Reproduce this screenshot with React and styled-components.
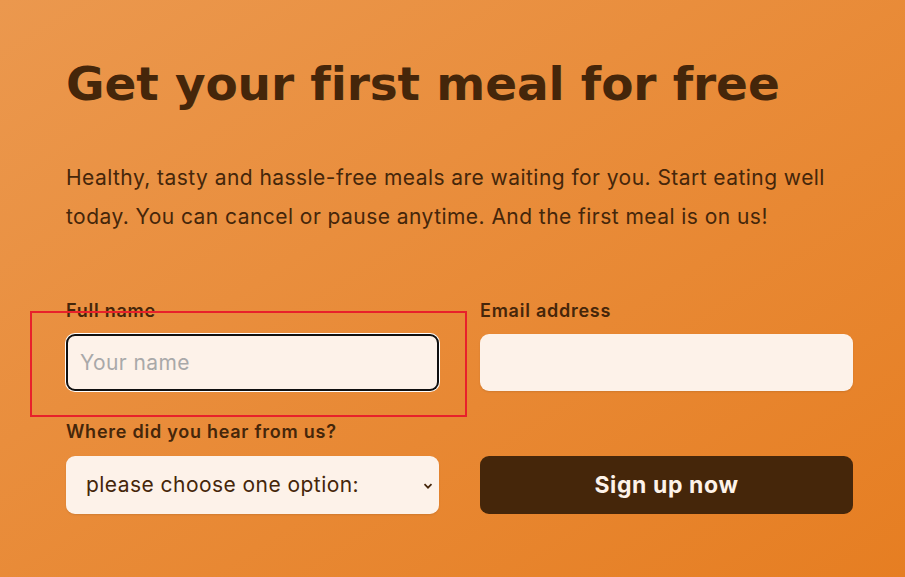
import React from "react";
import styled, { createGlobalStyle } from "styled-components";

const GlobalStyle = createGlobalStyle`
  * { box-sizing: border-box; margin: 0; padding: 0; }
  html, body { height: 100%; }
  body {
    font-family: Inter, "Noto Sans", sans-serif;
    color: #45260a;
    background: linear-gradient(to right bottom, #eb984e, #e67e22);
    overflow: hidden;
  }
`;

const Page = styled.section`
  position: relative;
  width: 905px;
  height: 577px;
  padding: 57px 53px 0 66px;
`;

const Heading = styled.h2`
  font-family: "DejaVu Sans", Inter, sans-serif;
  font-size: 47px;
  font-weight: 700;
  letter-spacing: -0.1px;
  line-height: 54px;
  margin-bottom: 48px;
`;

const Lead = styled.p`
  font-size: 21px;
  line-height: 38.85px;
  letter-spacing: 0.45px;
  max-width: 780px;
  margin-bottom: 63px;
`;

const Form = styled.form`
  display: grid;
  grid-template-columns: 373px 373px;
  column-gap: 41px;
  row-gap: 30px;
`;

const Field = styled.div`
  display: flex;
  flex-direction: column;
  gap: 13px;
`;

const Label = styled.label`
  font-size: 18px;
  font-weight: 600;
  letter-spacing: 0.75px;
  line-height: 21.6px;
`;

const Input = styled.input`
  height: 57px;
  width: 100%;
  border: none;
  border-radius: 9px;
  background: #fdf2e9;
  padding: 0 14px;
  font-family: inherit;
  font-size: 21px;
  letter-spacing: 0.4px;
  color: inherit;
  box-shadow: ${(p) =>
    p.$focused
      ? "0 0 0 2px #101010 inset, 0 0 0 1px #fff"
      : "0 1px 2px rgba(0, 0, 0, 0.1)"};
  outline: none;

  &::placeholder {
    color: #a9a9a9;
  }
`;

const SelectWrap = styled.div`
  position: relative;
`;

const Select = styled.select`
  appearance: none;
  height: 58px;
  width: 100%;
  border: none;
  border-radius: 9px;
  background: #fdf2e9;
  padding: 0 20px;
  font-family: inherit;
  font-size: 21px;
  letter-spacing: 0.45px;
  color: #45260a;
  box-shadow: 0 1px 2px rgba(0, 0, 0, 0.1);
`;

const Chevron = styled.svg`
  position: absolute;
  right: 6px;
  top: 25px;
  pointer-events: none;
`;

const Button = styled.button`
  align-self: end;
  height: 58px;
  border: none;
  border-radius: 9px;
  background: #45260a;
  color: #fdf2e9;
  font-family: inherit;
  font-size: 23px;
  font-weight: 700;
  letter-spacing: 0.6px;
`;

const Annotation = styled.div`
  position: absolute;
  left: 30px;
  top: 311px;
  width: 437px;
  height: 106px;
  border: 2px solid #e8212b;
  pointer-events: none;
`;

export default function App() {
  return (
    <>
      <GlobalStyle />
      <Page>
        <Heading>Get your first meal for free</Heading>
        <Lead>
          Healthy, tasty and hassle-free meals are waiting for you. Start eating well
          today. You can cancel or pause anytime. And the first meal is on us!
        </Lead>
        <Form onSubmit={(e) => e.preventDefault()}>
          <Field>
            <Label htmlFor="full-name">Full name</Label>
            <Input id="full-name" type="text" placeholder="Your name" $focused />
          </Field>
          <Field>
            <Label htmlFor="email">Email address</Label>
            <Input id="email" type="email" />
          </Field>
          <Field>
            <Label htmlFor="select-where">Where did you hear from us?</Label>
            <SelectWrap>
              <Select id="select-where" defaultValue="">
                <option value="">please choose one option:</option>
                <option value="friends">Friends and family</option>
                <option value="youtube">YouTube video</option>
                <option value="podcast">Podcast</option>
                <option value="ad">Facebook ad</option>
                <option value="others">Others</option>
              </Select>
              <Chevron width="10" height="10" viewBox="0 0 10 10">
                <path d="M1.5 3.2 L5 6.7 L8.5 3.2" fill="none" stroke="#45260a" strokeWidth="1.7" />
              </Chevron>
            </SelectWrap>
          </Field>
          <Button type="submit">Sign up now</Button>
        </Form>
        <Annotation />
      </Page>
    </>
  );
}
